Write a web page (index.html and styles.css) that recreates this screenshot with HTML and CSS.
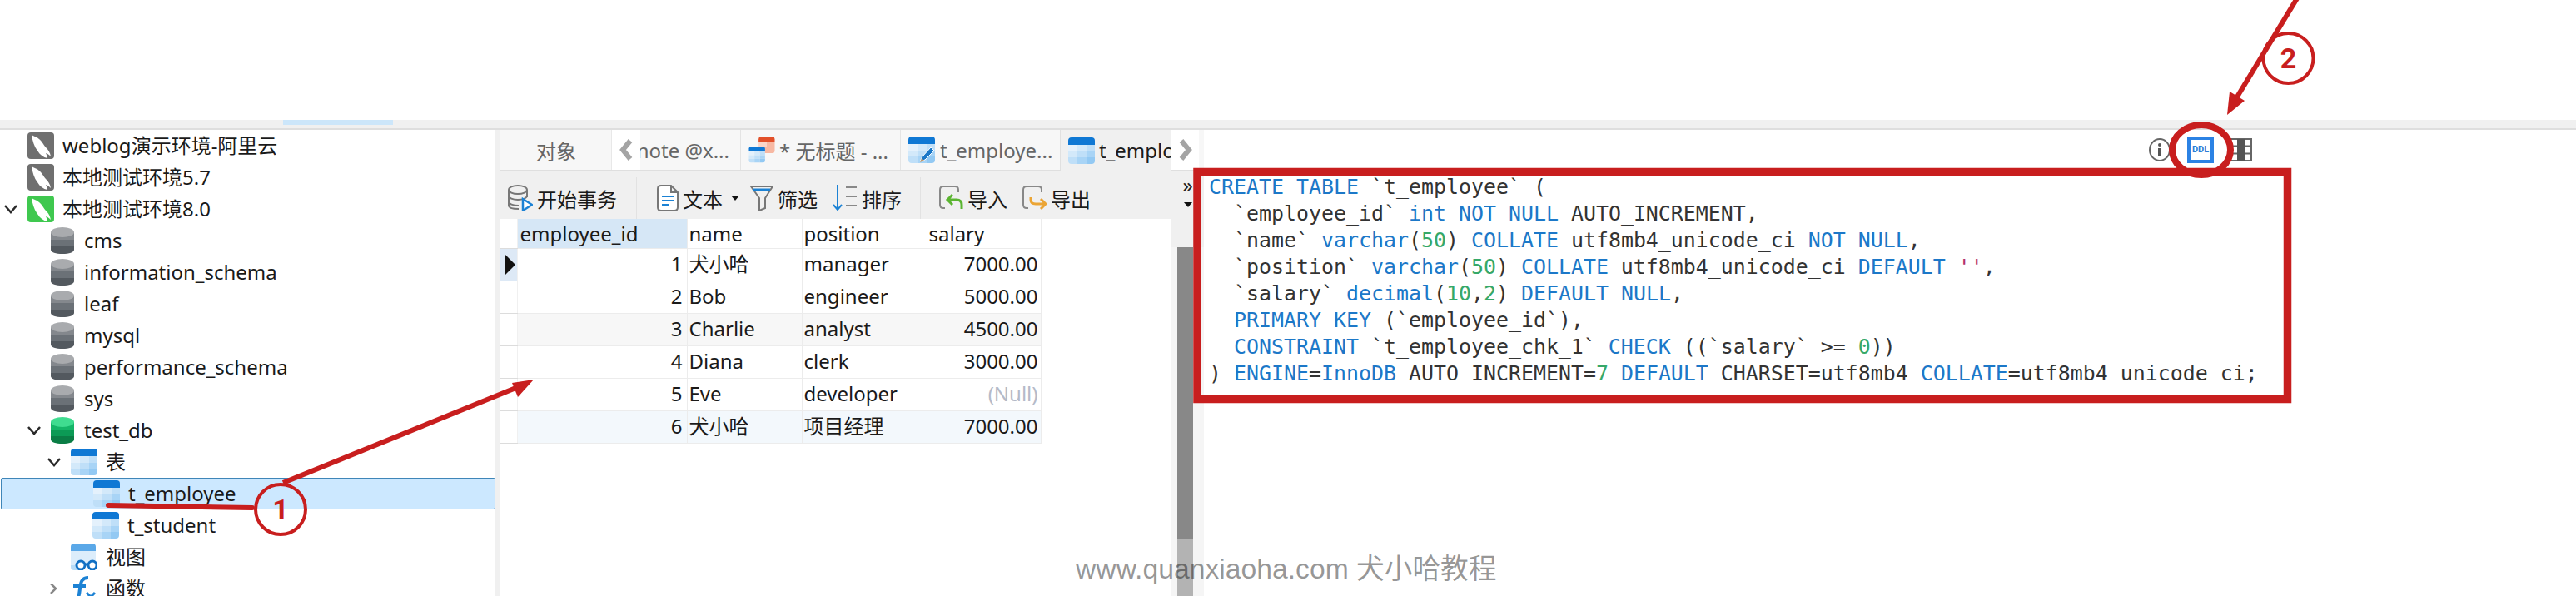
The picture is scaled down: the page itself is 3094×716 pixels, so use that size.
FILE: index.html
```html
<!DOCTYPE html>
<html lang="zh-CN">
<head>
<meta charset="utf-8">
<title>t_employee</title>
<link rel="stylesheet" href="styles.css">
</head>
<body>
<svg class="defs" aria-hidden="true">
  <defs>
    <symbol id="dolphin" viewBox="0 0 32 32">
      <path fill="#fff" d="M5 3C8 5 11 5 14 8C18 11 19 15 22 18C25 21 27 24 28 29C26 27 25 26 22 25C23 27 24 29 24 31C19 30 15 27 12 22C8 17 6 10 5 3Z"/>
    </symbol>
    <symbol id="db-gray" viewBox="0 0 28 32">
      <path fill="#53595f" d="M0 22H28V27C28 30 22 32 14 32S0 30 0 27Z"/>
      <rect y="14" width="28" height="9" fill="#6b7177"/>
      <rect y="6" width="28" height="9" fill="#84888d"/>
      <ellipse cx="14" cy="6" rx="14" ry="6" fill="#a9abae"/>
    </symbol>
    <symbol id="db-green" viewBox="0 0 28 32">
      <path fill="#0a7d45" d="M0 22H28V27C28 30 22 32 14 32S0 30 0 27Z"/>
      <rect y="14" width="28" height="9" fill="#0c9a55"/>
      <rect y="6" width="28" height="9" fill="#14b568"/>
      <ellipse cx="14" cy="6" rx="14" ry="6" fill="#3fdc90"/>
    </symbol>
    <symbol id="table" viewBox="0 0 32 32">
      <path fill="#0f78d4" d="M0 9V4Q0 0 4 0H28Q32 0 32 4V9Z"/>
      <path fill="#e4f1fc" d="M0 9H11V17H0Z"/>
      <path fill="#d3e9fa" d="M11 9H22V17H11ZM0 17H11V24H0Z"/>
      <path fill="#bfdff8" d="M22 9H32V17H22ZM11 17H22V24H11ZM0 24H11V32H4Q0 32 0 28Z"/>
      <path fill="#a8d4f6" d="M22 17H32V24H22ZM11 24H22V32H11Z"/>
      <path fill="#93c9f3" d="M22 24H32V28Q32 32 28 32H22Z"/>
    </symbol>
    <symbol id="table-red" viewBox="0 0 32 32">
      <path fill="#e2502a" d="M0 9V4Q0 0 4 0H28Q32 0 32 4V9Z"/>
      <path fill="#fad5c8" d="M0 9H16V20H0Z"/>
      <path fill="#f7b8a3" d="M16 9H32V28Q32 32 28 32H4Q0 32 0 28V20H16Z"/>
    </symbol>
  </defs>
</svg>

<div class="top-space"></div>
<div class="band"><div class="band-mark"></div></div>

<main class="main">
  <nav class="tree">
    <div class="row d0"><span class="chev"></span><span class="srv srv-gray"><svg><use href="#dolphin"/></svg></span><span>weblog演示环境-阿里云</span></div>
    <div class="row d0"><span class="chev"></span><span class="srv srv-gray"><svg><use href="#dolphin"/></svg></span><span>本地测试环境5.7</span></div>
    <div class="row d0"><span class="chev"><svg viewBox="0 0 16 12"><path class="chev-open" d="M1 2L8 10L15 2"/></svg></span><span class="srv srv-green"><svg><use href="#dolphin"/></svg></span><span>本地测试环境8.0</span></div>
    <div class="row d1"><span class="chev"></span><svg class="db"><use href="#db-gray"/></svg><span>cms</span></div>
    <div class="row d1"><span class="chev"></span><svg class="db"><use href="#db-gray"/></svg><span>information_schema</span></div>
    <div class="row d1"><span class="chev"></span><svg class="db"><use href="#db-gray"/></svg><span>leaf</span></div>
    <div class="row d1"><span class="chev"></span><svg class="db"><use href="#db-gray"/></svg><span>mysql</span></div>
    <div class="row d1"><span class="chev"></span><svg class="db"><use href="#db-gray"/></svg><span>performance_schema</span></div>
    <div class="row d1"><span class="chev"></span><svg class="db"><use href="#db-gray"/></svg><span>sys</span></div>
    <div class="row d1"><span class="chev"><svg viewBox="0 0 16 12"><path class="chev-open" d="M1 2L8 10L15 2"/></svg></span><svg class="db"><use href="#db-green"/></svg><span>test_db</span></div>
    <div class="row d2"><span class="chev"><svg viewBox="0 0 16 12"><path class="chev-open" d="M1 2L8 10L15 2"/></svg></span><svg class="tbl"><use href="#table"/></svg><span>表</span></div>
    <div class="row d3 selected"><span class="chev"></span><svg class="tbl"><use href="#table"/></svg><span>t_employee</span></div>
    <div class="row d3"><span class="chev"></span><svg class="tbl"><use href="#table"/></svg><span>t_student</span></div>
    <div class="row d2"><span class="chev"></span><svg class="tbl" viewBox="0 0 32 32">
      <path fill="#5aa8e8" d="M0 9V4Q0 0 4 0H26Q30 0 30 4V9Z"/>
      <path fill="#dcedfb" d="M0 9H30V26H0Z"/>
      <path fill="#b9dcf7" d="M0 26H12V32H4Q0 32 0 28Z"/>
      <circle cx="12" cy="26" r="5" fill="#fff" stroke="#1270c4" stroke-width="3"/>
      <circle cx="26" cy="26" r="5" fill="#fff" stroke="#1270c4" stroke-width="3"/>
      <path d="M16 25H22" stroke="#1270c4" stroke-width="3"/>
    </svg><span>视图</span></div>
    <div class="row d2"><span class="chev"><svg viewBox="0 0 16 12"><path class="chev-closed" d="M4 0L10 6L4 12"/></svg></span><svg class="tbl" viewBox="0 0 32 32">
      <path d="M5 28C10 28 10 24 11 16C12 7 14 3 21 3M3 13H18" fill="none" stroke="#1c82d4" stroke-width="4"/>
      <path d="M19 21L29 31M29 21L19 31" fill="none" stroke="#1c82d4" stroke-width="3"/>
    </svg><span>函数</span></div>
  </nav>
  <div class="splitter"></div>

  <section class="center">
    <div class="tabs">
      <div class="tab tab-object">对象</div>
      <div class="tab-arrow"><svg viewBox="0 0 16 26"><path d="M13 2L4 13L13 24" class="arrow-stroke"/></svg></div>
      <div class="tab tab-note"><span>note @x...</span></div>
      <div class="tab tab-query">
        <svg class="tab-icon" viewBox="0 0 33 32"><use href="#table-red" x="12" y="0" width="21" height="20"/><use href="#table" x="0" y="12" width="21" height="20"/></svg>
        <span>* 无标题 - ...</span>
      </div>
      <div class="tab tab-design">
        <svg class="tab-icon" viewBox="0 0 32 32"><use href="#table"/><path d="M14 30L17 24L27 13L31 17L20 28Z" fill="#1c78c8" stroke="#fff" stroke-width="1"/><path d="M14 31L16 26L19 29Z" fill="#c49a6c"/></svg>
        <span>t_employe...</span>
      </div>
      <div class="tab tab-active">
        <svg class="tab-icon"><use href="#table"/></svg>
        <span>t_employee</span>
      </div>
      <div class="tab-arrow tab-arrow-right"><svg viewBox="0 0 16 26"><path d="M3 2L12 13L3 24" class="arrow-stroke"/></svg></div>
    </div>

    <div class="center-body">
      <div class="grid-col">
        <div class="toolbar">
          <div class="tool tool-first">
            <svg class="ticon ticon-wide" viewBox="0 0 30 32"><g fill="none" stroke="#777" stroke-width="2"><ellipse cx="12" cy="6" rx="11" ry="5"/><path d="M1 6V25C1 28 6 29 13 29M23 6V15M1 13C1 16 6 18 12 18S23 16 23 13M1 20C1 23 6 25 13 25"/></g><path d="M18 17L29 24L18 31Z" fill="#fff" stroke="#1c82d4" stroke-width="2.5"/></svg>
            <span>开始事务</span>
          </div>
          <div class="tsep"></div>
          <div class="tool">
            <svg class="ticon" viewBox="0 0 26 32"><path d="M5 1H17L25 9V27Q25 31 21 31H5Q1 31 1 27V5Q1 1 5 1ZM17 1V9H25" fill="#fff" stroke="#777" stroke-width="2"/><path d="M6 14H20M6 19H20M6 24H15" stroke="#1c82d4" stroke-width="2"/></svg>
            <span>文本</span>
            <span class="caret"></span>
          </div>
          <div class="tool tool-filter">
            <svg class="ticon ticon-filter" viewBox="0 0 28 32"><path d="M1 2H27L18 16V28L11 31V16Z" fill="none" stroke="#777" stroke-width="2"/><path d="M4 6H24" stroke="#1c82d4" stroke-width="3"/></svg>
            <span>筛选</span>
          </div>
          <div class="tool tool-sort">
            <svg class="ticon ticon-sort" viewBox="0 0 30 32"><path d="M6 0V30M1 24L6 30L11 24" fill="none" stroke="#1c82d4" stroke-width="2"/><path d="M16 3H29M16 14H29M16 25H29" stroke="#888" stroke-width="2"/></svg>
            <span>排序</span>
          </div>
          <div class="tsep tsep-2"></div>
          <div class="tool">
            <svg class="ticon ticon-wide" viewBox="0 0 30 32"><path d="M8 28H6Q2 28 2 24V6Q2 2 6 2H20Q24 2 24 6V9" fill="none" stroke="#888" stroke-width="2"/><path d="M28 29V24Q28 18 22 18H12M17 12L11 18L17 24" fill="none" stroke="#5bb531" stroke-width="3"/></svg>
            <span>导入</span>
          </div>
          <div class="tool tool-export">
            <svg class="ticon ticon-wide" viewBox="0 0 30 32"><path d="M8 28H6Q2 28 2 24V6Q2 2 6 2H20Q24 2 24 6V9" fill="none" stroke="#888" stroke-width="2"/><path d="M11 15V18Q11 23 17 23H28M23 17L29 23L23 29" fill="none" stroke="#eba535" stroke-width="3"/></svg>
            <span>导出</span>
          </div>
        </div>

        <div class="grid-area">
          <table class="grid">
            <colgroup><col class="c-mark"><col class="c-id"><col class="c-name"><col class="c-pos"><col class="c-sal"></colgroup>
            <thead>
              <tr><th class="mark mark-head"></th><th class="th-sel">employee_id</th><th>name</th><th>position</th><th>salary</th></tr>
            </thead>
            <tbody>
              <tr><td class="mark mark-cur"><span class="cursor"></span></td><td class="num">1</td><td>犬小哈</td><td>manager</td><td class="num sal">7000.00</td></tr>
              <tr><td class="mark"></td><td class="num">2</td><td>Bob</td><td>engineer</td><td class="num sal">5000.00</td></tr>
              <tr class="alt"><td class="mark"></td><td class="num">3</td><td>Charlie</td><td>analyst</td><td class="num sal">4500.00</td></tr>
              <tr><td class="mark"></td><td class="num">4</td><td>Diana</td><td>clerk</td><td class="num sal">3000.00</td></tr>
              <tr><td class="mark"></td><td class="num">5</td><td>Eve</td><td>developer</td><td class="num sal null">(Null)</td></tr>
              <tr class="hl"><td class="mark"></td><td class="num">6</td><td>犬小哈</td><td>项目经理</td><td class="num sal">7000.00</td></tr>
            </tbody>
          </table>
        </div>
      </div>

      <div class="strip">
        <div class="strip-top"><span class="more">»</span><span class="caret"></span></div>
        <div class="scroll"><div class="thumb"></div><div class="rest"></div></div>
      </div>
    </div>
  </section>

  <section class="ddl">
    <div class="ddl-tools">
      <svg class="info" viewBox="0 0 26 28"><ellipse cx="13" cy="14" rx="12" ry="13" fill="#fff" stroke="#666" stroke-width="2"/><circle cx="13" cy="8" r="2" fill="#555"/><rect x="11" y="12" width="4" height="10" fill="#555"/></svg>
      <div class="ddl-btn">DDL</div>
      <svg class="gridicon" viewBox="0 0 27 28"><path d="M1 1H26V27H1ZM1 9.500H26M1 18.500H26" fill="none" stroke="#666" stroke-width="2"/><rect x="9" y="1" width="9" height="26" fill="#555"/></svg>
    </div>
    <div class="code">
      <div class="line"><span class="k">CREATE</span> <span class="k">TABLE</span> `t_employee` (</div>
      <div class="line">  `employee_id` <span class="k">int</span> <span class="k">NOT</span> <span class="k">NULL</span> AUTO_INCREMENT,</div>
      <div class="line">  `name` <span class="k">varchar</span>(<span class="n">50</span>) <span class="k">COLLATE</span> utf8mb4_unicode_ci <span class="k">NOT</span> <span class="k">NULL</span>,</div>
      <div class="line">  `position` <span class="k">varchar</span>(<span class="n">50</span>) <span class="k">COLLATE</span> utf8mb4_unicode_ci <span class="k">DEFAULT</span> <span class="s">''</span>,</div>
      <div class="line">  `salary` <span class="k">decimal</span>(<span class="n">10</span>,<span class="n">2</span>) <span class="k">DEFAULT</span> <span class="k">NULL</span>,</div>
      <div class="line">  <span class="k">PRIMARY</span> <span class="k">KEY</span> (`employee_id`),</div>
      <div class="line">  <span class="k">CONSTRAINT</span> `t_employee_chk_1` <span class="k">CHECK</span> ((`salary` &gt;= <span class="n">0</span>))</div>
      <div class="line">) <span class="k">ENGINE</span>=<span class="k">InnoDB</span> AUTO_INCREMENT=<span class="n">7</span> <span class="k">DEFAULT</span> CHARSET=utf8mb4 <span class="k">COLLATE</span>=utf8mb4_unicode_ci;</div>
    </div>
  </section>
</main>

<svg class="notes" viewBox="0 0 3094 716" aria-hidden="false">
  <rect class="note-box" x="1438" y="206.500" width="1309.500" height="273"/>
  <ellipse class="note-ring" cx="2644" cy="180" rx="35" ry="30"/>
  <path class="note-line" d="M2759 -2L2686 118"/>
  <polygon class="note-fill" points="2675,138 2678,110 2696,121"/>
  <circle class="note-circle" cx="2748.500" cy="70" r="30"/>
  <text class="note-num" x="2748.500" y="82">2</text>
  <path class="note-under" d="M130 607L303 610"/>
  <path class="note-line" d="M340 580L622 465"/>
  <polygon class="note-fill" points="641,456 615,460 622,477"/>
  <circle class="note-circle" cx="337" cy="612" r="30"/>
  <text class="note-num" x="337" y="624">1</text>
</svg>
<div class="watermark">www.quanxiaoha.com 犬小哈教程</div>
</body>
</html>
```
FILE: styles.css
```css
* { box-sizing: border-box; }
html, body { margin: 0; padding: 0; }
body {
  position: relative;
  width: 3094px;
  height: 716px;
  overflow: hidden;
  background: #fff;
  color: #1a1a1a;
  font-family: "Noto Sans", "Noto Sans CJK SC", sans-serif;
  font-size: 24px;
}
.defs { position: absolute; width: 0; height: 0; }
.top-space { height: 144px; }
.band {
  height: 12px;
  background: #f0f0f0;
  border-bottom: 2px solid #dedede;
}
.band-mark { margin-left: 340px; width: 132px; height: 6px; background: #cce6fa; }
.main { display: flex; height: 560px; }

/* tree */
.tree { width: 595px; flex: none; overflow: hidden; }
.row { display: flex; align-items: center; height: 38px; white-space: nowrap; line-height: 38px; }
.row.d0 { padding-left: 5px; }
.row.d1 { padding-left: 33px; }
.row.d2 { padding-left: 57px; }
.row.d3 { padding-left: 83px; }
.chev { width: 28px; flex: none; display: flex; align-items: center; }
.chev svg { width: 16px; height: 12px; }
.chev-open { fill: none; stroke: #2a2a2a; stroke-width: 2.500; }
.chev-closed { fill: none; stroke: #888; stroke-width: 2.500; }
.srv { width: 32px; height: 32px; border-radius: 4px; margin-right: 10px; flex: none; display: block; }
.srv svg { display: block; width: 32px; height: 32px; }
.srv-gray { background: #6f6f6f; }
.srv-green { background: #3fc84f; }
.db { width: 28px; height: 32px; margin-right: 12px; flex: none; }
.tbl { width: 32px; height: 32px; margin-right: 10px; flex: none; }
.selected {
  background: #cce8ff;
  border: 1px solid #3f86b8;
  border-radius: 2px;
  margin-left: 1px;
  padding-left: 82px !important;
}
.splitter { width: 5px; flex: none; background: #f0f0f0; }

/* center */
.center { width: 846px; flex: none; display: flex; flex-direction: column; background: #f5f5f5; }
.tabs { height: 49px; display: flex; flex: none; background: #f7f7f7; border-bottom: 1px solid #dfdfdf; color: #666; }
.tab { display: flex; align-items: center; height: 48px; white-space: nowrap; overflow: hidden; }
.tab-object { width: 135px; justify-content: center; padding-left: 2px; border-right: 1px solid #e8e8e8; }
.tab-arrow { width: 34px; flex: none; background: #fff; display: flex; align-items: center; justify-content: center; }
.tab-arrow svg { width: 16px; height: 26px; }
.arrow-stroke { fill: none; stroke: #a4a4a4; stroke-width: 6; }
.tab-note { width: 121px; justify-content: flex-end; padding-right: 13px; border-right: 1px solid #e4e4e4; }
.tab-note span { flex: none; }
.tab-query { width: 192px; padding-left: 9px; gap: 5px; border-right: 1px solid #e4e4e4; }
.tab-design { width: 192px; padding-left: 9px; gap: 6px; border-right: 1px solid #e0e0e0; }
.tab-active { width: 133px; height: 49px; margin-bottom: -1px; padding-left: 9px; gap: 5px; background: #f0f0f0; color: #1a1a1a; }
.tab-icon { width: 32px; height: 32px; flex: none; }
.tab-arrow-right { width: 33px; }
.center-body { flex: 1; display: flex; min-height: 0; }
.grid-col { width: 807px; flex: none; display: flex; flex-direction: column; }
.toolbar { height: 58px; flex: none; display: flex; align-items: center; padding: 8px 0 0 10px; background: #f0f0f0; }
.tool { display: flex; align-items: center; gap: 5px; white-space: nowrap; }
.ticon { width: 26px; height: 32px; flex: none; }
.ticon-wide { width: 30px; }
.ticon-filter { width: 28px; }
.ticon-sort { width: 30px; }
.tsep { width: 1px; height: 50px; margin: 0 24px 0 23px; background: #e2e2e2; align-self: flex-end; }
.tsep-2 { margin-left: 22px; margin-right: 21px; }
.tool-filter { margin-left: 13px; }
.tool-sort { margin-left: 18px; }
.tool-export { margin-left: 17px; }
.caret { width: 0; height: 0; border: 5px solid transparent; border-top: 6px solid #111; border-bottom: 0; }
.tool .caret { margin-left: 5px; }
.grid-area { flex: 1; background: #fff; }
.grid { border-collapse: collapse; table-layout: fixed; width: 650px; }
.c-mark { width: 21px; }
.c-id { width: 204px; }
.c-name { width: 138px; }
.c-pos { width: 150px; }
.c-sal { width: 137px; }
.grid th, .grid td {
  padding: 0 3px 2px 2px;
  font-weight: 400;
  text-align: left;
  white-space: nowrap;
  overflow: hidden;
  border-right: 1px solid #ececec;
  border-bottom: 1px solid #ececec;
}
.grid th { height: 35px; padding-top: 3px; line-height: 30px; }
.grid td { height: 39px; line-height: 36px; }
.grid .th-sel { background: #d6e7f6; padding-left: 3px; }
.grid .mark { padding: 0; background: #fff; border-bottom-color: #dcdcdc; border-right-color: #f0f0f0; }
.grid .mark-cur { background: #dde9f6; }
.grid .num { text-align: right; padding-right: 5px; }
.grid .sal { padding-right: 3px; }
.grid .null { color: #b4bac8; }
.alt td { background: #f7f7f7; }
.hl td { background: #f3f8fc; }
.cursor {
  display: block;
  width: 0;
  height: 0;
  margin-left: 7px;
  border: 12px solid transparent;
  border-left: 12px solid #111;
  border-right: 0;
}
.strip { width: 39px; flex: none; display: flex; flex-direction: column; background: #f5f5f5; }
.strip-top {
  height: 92px;
  flex: none;
  background: #f0f0f0;
  display: flex;
  flex-direction: column;
  align-items: center;
  padding: 2px 0 0 0;
  gap: 6px;
  font-size: 24px;
  line-height: 30px;
}
.more { color: #222; }
.scroll { flex: 1; margin-left: 7px; width: 19px; display: flex; flex-direction: column; }
.thumb { height: 351px; flex: none; background: #888; }
.rest { flex: 1; background: #b3b3b3; }

/* ddl */
.ddl { flex: 1; min-width: 0; background: #fff; }
.ddl-tools { height: 46px; display: flex; align-items: center; justify-content: flex-end; padding: 2px 389px 0 0; }
.info { width: 26px; height: 28px; }
.ddl-btn {
  width: 32px;
  height: 32px;
  margin: 0 19px 0 20px;
  border: 4px solid #2b82e4;
  color: #2b7fd8;
  font: 700 11px/24px "Roboto", sans-serif;
  text-align: center;
}
.gridicon { width: 27px; height: 28px; }
.code {
  padding: 7px 0 0 6px;
  font-family: "DejaVu Sans Mono", monospace;
  font-size: 24.920px;
  line-height: 32px;
  color: #333;
}
.line { height: 32px; white-space: pre; }
.k { color: #1c78c8; }
.n { color: #35a868; }
.s { color: #b3306c; }

/* annotations drawn over the screenshot */
.notes { position: absolute; left: 0; top: 0; width: 3094px; height: 716px; pointer-events: none; }
.note-box { fill: none; stroke: #c81e1e; stroke-width: 9.500; }
.note-ring { fill: none; stroke: #c81e1e; stroke-width: 8; }
.note-line { fill: none; stroke: #c81e1e; stroke-width: 6; }
.note-under { fill: none; stroke: #c81e1e; stroke-width: 6; stroke-linecap: round; }
.note-fill { fill: #c81e1e; }
.note-circle { fill: none; stroke: #c81e1e; stroke-width: 4; }
.note-num { fill: #c81e1e; font: 700 34px "Roboto", sans-serif; text-anchor: middle; }
.watermark {
  position: absolute;
  left: 1292px;
  top: 664px;
  font-family: "Liberation Sans", "Noto Sans CJK SC", sans-serif;
  font-size: 33.700px;
  line-height: 38px;
  color: rgba(0, 0, 0, .42);
  white-space: nowrap;
}
```
